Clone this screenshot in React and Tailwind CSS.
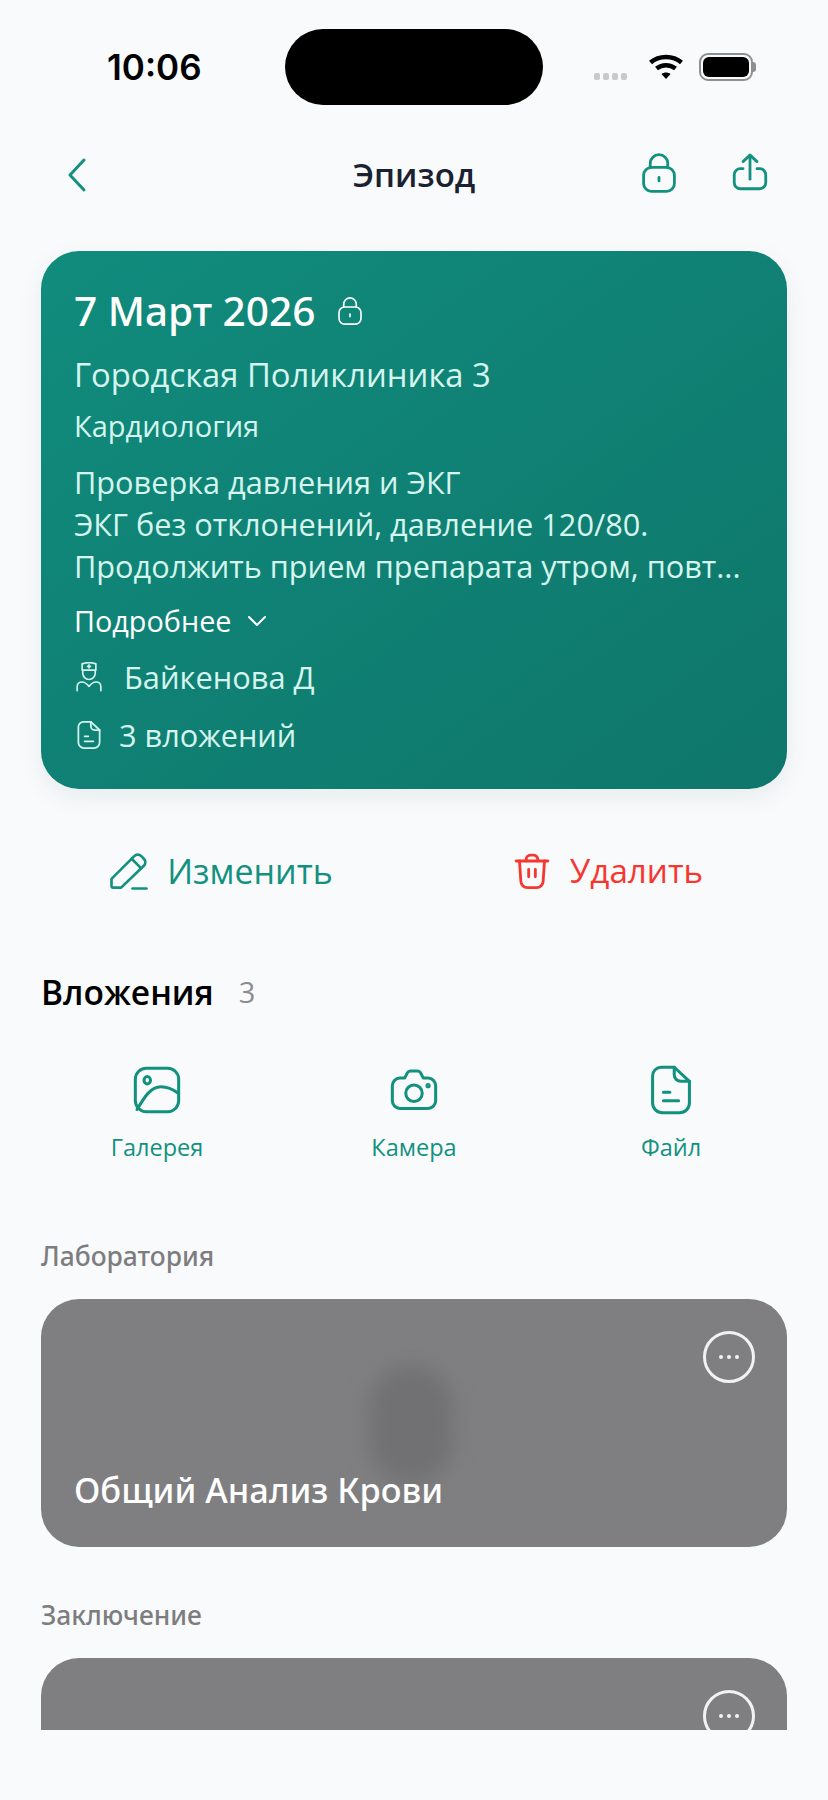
const TEAL = "#12917f";

const Svg = ({ size, stroke = 2, className, children, vb = 24 }) => (
  <svg width={size} height={size} viewBox={`0 0 ${vb} ${vb}`} fill="none" stroke="currentColor" strokeWidth={stroke} strokeLinecap="round" strokeLinejoin="round" className={className}>
    {children}
  </svg>
);

const LockIcon = ({ size, stroke }) => (
  <Svg size={size} stroke={stroke}>
    <path d="M7 9V6.500a5 5 0 0 1 10 0V9" />
    <rect x="3.200" y="8.800" width="17.600" height="13.700" rx="4.500" />
    <path d="M12 14.500v2" />
  </Svg>
);

const ShareIcon = ({ size, stroke }) => (
  <Svg size={size} stroke={stroke}>
    <path d="M8 9.500H6.500A3.500 3.500 0 0 0 3 13v4.500A3.500 3.500 0 0 0 6.500 21h11a3.500 3.500 0 0 0 3.500-3.500V13a3.500 3.500 0 0 0-3.500-3.500H16" />
    <path d="M12 15.500V1.800" />
    <path d="M8 5.500l4-3.700 4 3.700" />
  </Svg>
);

const FileIcon = ({ size, stroke }) => (
  <Svg size={size} stroke={stroke}>
    <path d="M7.500 1.500h6L20.500 8v10a4.500 4.500 0 0 1-4.500 4.500H8A4.500 4.500 0 0 1 3.500 18V5.500a4 4 0 0 1 4-4z" />
    <path d="M13.500 1.500V5a3 3 0 0 0 3 3h4" />
    <path d="M8.500 13h3M8.500 17h7" />
  </Svg>
);

const DoctorIcon = ({ size }) => (
  <Svg size={size} stroke={1.300}>
    <path d="M6.500 1.500c3.500-1.300 7.500-1.300 11 0v5h-11z" />
    <path d="M12 2.300v2.400M10.800 3.500h2.400" />
    <path d="M7 6.500V9a5 5 0 0 0 10 0V6.500" />
    <path d="M2.500 23v-3c0-2.500 1.500-4 4-4s3.500 1 5.500 3.500c2-2.500 3-3.500 5.500-3.500s4 1.500 4 4v3" />
  </Svg>
);

const Dots = () => (
  <div className="absolute right-[32px] top-[32px] w-[52px] h-[52px] rounded-full border-[3px] border-[#f2f2f2] flex items-center justify-center gap-[4px]">
    <span className="w-[4px] h-[4px] rounded-full bg-[#f2f2f2]" />
    <span className="w-[4px] h-[4px] rounded-full bg-[#f2f2f2]" />
    <span className="w-[4px] h-[4px] rounded-full bg-[#f2f2f2]" />
  </div>
);

const AttachAction = ({ icon, label }) => (
  <div className="flex flex-col items-center w-[200px] text-[#12917f]">
    <div className="h-[52px] flex items-center justify-center">{icon}</div>
    <span className="mt-[16px] text-[23.500px] leading-[30px]">{label}</span>
  </div>
);

const App = () => {
  return (
    <div className="w-[828px] h-[1800px] bg-[#f9fafc] overflow-hidden font-['Open_Sans',sans-serif]">
      <div className="h-[1730px] overflow-hidden">
        {/* Status bar */}
        <div className="h-[105px] relative">
          <span className="absolute left-[107px] top-[46px] text-[35px] leading-[42px] font-semibold text-black font-['Inter',sans-serif]">10:06</span>
          <div className="absolute left-[285px] top-[29px] w-[258px] h-[76px] rounded-[38px] bg-black" />
          <div className="absolute left-[594px] top-[73px] flex gap-[3px]">
            <span className="w-[6px] h-[7px] rounded-[2px] bg-[#c9c9c9]" />
            <span className="w-[6px] h-[7px] rounded-[2px] bg-[#c9c9c9]" />
            <span className="w-[6px] h-[7px] rounded-[2px] bg-[#c9c9c9]" />
            <span className="w-[6px] h-[7px] rounded-[2px] bg-[#c9c9c9]" />
          </div>
          <svg className="absolute left-[649px] top-[54px]" width="34" height="26" viewBox="0 0 34 26" fill="none" stroke="#000" strokeWidth="4.500">
            <path d="M1.500 8.500C10 1 24 1 32.500 8.500" />
            <path d="M7.500 14.500c5.500-4.500 13.500-4.500 19 0" />
            <path d="M12.500 20 17 25l4.500-5c-2.500-2-6.500-2-9 0z" fill="#000" stroke="none" />
          </svg>
          <div className="absolute left-[699px] top-[53px] w-[54px] h-[28px] rounded-[9px] border-[2px] border-[#8f8f8f] p-[2px]">
            <div className="w-full h-full rounded-[6px] bg-black" />
          </div>
          <div className="absolute left-[753px] top-[62px] w-[3px] h-[10px] rounded-r-[3px] bg-[#8f8f8f]" />
        </div>

        {/* Nav */}
        <div className="h-[146px] relative flex items-center justify-center">
          <svg className="absolute left-[66px] top-[52px]" width="22" height="36" viewBox="0 0 22 36" fill="none" stroke={TEAL} strokeWidth="3" strokeLinecap="round" strokeLinejoin="round">
            <path d="M18 3 4 18l14 15" />
          </svg>
          <h1 className="-mt-[6px] text-[33px] leading-[44px] font-semibold text-[#1a2130]">Эпизод</h1>
          <div className="absolute left-[638px] top-[47px] text-[#12917f]"><LockIcon size={42} stroke={1.600} /></div>
          <div className="absolute left-[729px] top-[47px] text-[#12917f]"><ShareIcon size={42} stroke={1.600} /></div>
        </div>

        {/* Episode card */}
        <div className="mx-[41px] h-[538px] rounded-[38px] bg-gradient-to-br from-[#108c7d] to-[#0f766b] shadow-[0_8px_24px_rgba(15,80,70,0.08)] px-[33px] pt-[32px]">
          <div className="flex items-center gap-[20px]">
            <span className="text-[40.600px] leading-[56px] font-medium text-white font-['Noto_Sans',sans-serif]">7 Март 2026</span>
            <span className="text-white"><LockIcon size={30} stroke={1.300} /></span>
          </div>
          <p className="mt-[14px] text-[32.800px] leading-[44px] text-[#d5f5ee]">Городская Поликлиника 3</p>
          <p className="mt-[10px] text-[29px] leading-[38px] text-[#d5f5ee]">Кардиология</p>
          <div className="mt-[16px] text-[30.700px] leading-[42px] text-[#d5f5ee]">
            <p>Проверка давления и ЭКГ</p>
            <p>ЭКГ без отклонений, давление 120/80.</p>
            <p className="whitespace-nowrap">Продолжить прием препарата утром, повт...</p>
          </div>
          <div className="mt-[15px] flex items-center gap-[16px] text-white">
            <span className="text-[28.800px] leading-[38px]">Подробнее</span>
            <svg width="20" height="12" viewBox="0 0 20 12" fill="none" stroke="currentColor" strokeWidth="2" strokeLinecap="round" strokeLinejoin="round"><path d="M2 2l8 8 8-8" /></svg>
          </div>
          <div className="mt-[17px] flex items-center gap-[20px] text-[#d5f5ee]">
            <DoctorIcon size={30} />
            <span className="text-[30.800px] leading-[40px]">Байкенова Д</span>
          </div>
          <div className="mt-[18px] flex items-center gap-[15px] text-[#d5f5ee]">
            <FileIcon size={30} stroke={1.400} />
            <span className="text-[30.700px] leading-[40px]">3 вложений</span>
          </div>
        </div>

        {/* Edit / delete */}
        <div className="mt-[60px] flex px-[30px]">
          <div className="flex-1 flex items-center justify-center gap-[17px] pr-[6px] text-[#12917f]">
            <svg width="42" height="42" viewBox="0 0 24 24" fill="none" stroke="currentColor" strokeWidth="1.500" strokeLinecap="round" strokeLinejoin="round">
              <path d="M2 20.500v-4L15 3.500a2.800 2.800 0 0 1 4 0l1.500 1.500a2.800 2.800 0 0 1 0 4L7.500 21.500H3a1 1 0 0 1-1-1z" />
              <path d="M13.500 5l5.500 5.500" />
              <path d="M14 22h8" />
            </svg>
            <span className="text-[34px] leading-[44px]">Изменить</span>
          </div>
          <div className="flex-1 flex items-center justify-center gap-[18px] text-[#f6372f]">
            <svg width="40" height="40" viewBox="0 0 24 24" fill="none" stroke="currentColor" strokeWidth="1.700" strokeLinecap="round" strokeLinejoin="round">
              <path d="M2.500 6h19" />
              <path d="M8.500 6V5a2.500 2.500 0 0 1 2.500-2.500h2A2.500 2.500 0 0 1 15.500 5v1" />
              <path d="M4.500 6l.8 12a4 4 0 0 0 4 4h5.400a4 4 0 0 0 4-4l.8-12" />
              <path d="M10 11v4.500M14 11v4.500" />
            </svg>
            <span className="text-[33.200px] leading-[44px]">Удалить</span>
          </div>
        </div>

        {/* Attachments */}
        <div className="mt-[77px] px-[41px] flex items-center gap-[25px]">
          <h2 className="text-[33.500px] leading-[44px] font-semibold text-black">Вложения</h2>
          <span className="text-[29px] leading-[44px] text-[#8c8c90]">3</span>
        </div>

        <div className="mt-[50px] flex justify-between px-[57px]">
          <AttachAction label="Галерея" icon={
            <Svg size={52} stroke={1.400}>
              <rect x="2" y="2" width="20" height="20" rx="5" />
              <ellipse cx="7.500" cy="7.500" rx="1.500" ry="1.700" />
              <path d="M2.800 21c3-5 6-10.500 11-10.500 3 0 6 1.500 8 3" />
            </Svg>
          } />
          <AttachAction label="Камера" icon={
            <Svg size={52} stroke={1.400}>
              <path d="M5.500 6.500h2.200l1.300-2.500a1.500 1.500 0 0 1 1.300-.8h3.400a1.500 1.500 0 0 1 1.300.8l1.300 2.500h2.200A3.500 3.500 0 0 1 22 10v7a3.500 3.500 0 0 1-3.500 3.500h-13A3.500 3.500 0 0 1 2 17v-7a3.500 3.500 0 0 1 3.500-3.500z" />
              <circle cx="12" cy="13.500" r="3.800" />
              <circle cx="18.500" cy="10" r=".5" />
            </Svg>
          } />
          <AttachAction label="Файл" icon={<FileIcon size={52} stroke={1.400} />} />
        </div>

        <p className="mt-[76px] px-[41px] text-[26.400px] leading-[36px] font-medium text-[#7d7d80] font-['Noto_Sans',sans-serif]">Лаборатория</p>
        <div className="relative mt-[25px] mx-[41px] h-[248px] rounded-[38px] bg-[#7f7f81] overflow-hidden">
          <div className="absolute left-[328px] top-[66px] w-[84px] h-[118px] rounded-full bg-[#717173] blur-[10px]" />
          <Dots />
          <p className="absolute left-[33px] top-[169px] text-[34.400px] leading-[44px] font-medium text-white font-['Noto_Sans',sans-serif]">Общий Анализ Крови</p>
        </div>

        <p className="mt-[50px] px-[41px] text-[26.400px] leading-[36px] font-medium text-[#7d7d80] font-['Noto_Sans',sans-serif]">Заключение</p>
        <div className="relative mt-[25px] mx-[41px] h-[248px] rounded-[38px] bg-[#7f7f81] overflow-hidden">
          <Dots />
        </div>
      </div>
    </div>
  );
};

export default App;
